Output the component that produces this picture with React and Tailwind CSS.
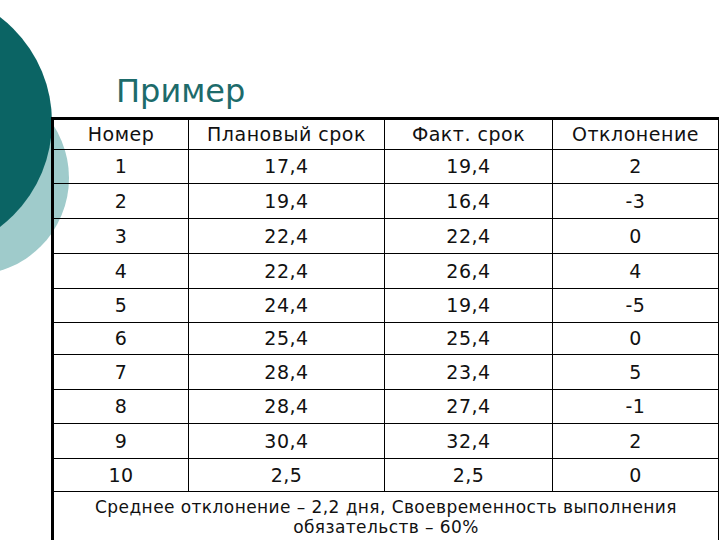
import React from 'react';

const rows = [
  ['1', '17,4', '19,4', '2', 34],
  ['2', '19,4', '16,4', '-3', 35],
  ['3', '22,4', '22,4', '0', 35],
  ['4', '22,4', '26,4', '4', 35],
  ['5', '24,4', '19,4', '-5', 34],
  ['6', '25,4', '25,4', '0', 32],
  ['7', '28,4', '23,4', '5', 35],
  ['8', '28,4', '27,4', '-1', 34],
  ['9', '30,4', '32,4', '2', 35],
  ['10', '2,5', '2,5', '0', 33],
];

const heights = {
  32: 'h-[32px]',
  33: 'h-[33px]',
  34: 'h-[34px]',
  35: 'h-[35px]',
};

function Row({ cells, h }) {
  return (
    <div className={`flex border-b border-black ${h}`}>
      <div className="w-[135px] border-r border-black flex items-center justify-center">{cells[0]}</div>
      <div className="w-[196px] border-r border-black flex items-center justify-center">{cells[1]}</div>
      <div className="w-[168px] border-r border-black flex items-center justify-center">{cells[2]}</div>
      <div className="flex-1 flex items-center justify-center">{cells[3]}</div>
    </div>
  );
}

export default function App() {
  return (
    <div className="relative w-[720px] h-[540px] overflow-hidden bg-white">
      {/* decorative circles on the left */}
      <div className="absolute left-[-125px] top-[81px] w-[194px] h-[194px] rounded-full bg-[#9fcbcb]" />
      <div className="absolute left-[-212px] top-[-10px] w-[264px] h-[264px] rounded-full bg-[#0b6464]" />

      <div className="relative">
        <h1 className="pl-[116px] pt-[71px] h-[117px] text-[32px] leading-[40px] text-[#1d6b6b] font-['DejaVu_Sans',sans-serif]">
          Пример
        </h1>

        <div className="ml-[51px] w-[668px] border-l-[3px] border-t-[3px] border-r border-black text-[19px] tracking-[0.5px] text-[#111] font-['DejaVu_Sans',sans-serif]">
          <Row cells={['Номер', 'Плановый срок', 'Факт. срок', 'Отклонение']} h="h-[30px]" />
          {rows.map((r) => (
            <Row key={r[0]} cells={r} h={heights[r[4]]} />
          ))}
          <div className="h-[60px] pt-[5px] text-center text-[17px] tracking-[0.42px] leading-[20px]">
            Среднее отклонение – 2,2 дня, Своевременность выполнения
            <br />
            обязательств – 60%
          </div>
        </div>
      </div>
    </div>
  );
}
